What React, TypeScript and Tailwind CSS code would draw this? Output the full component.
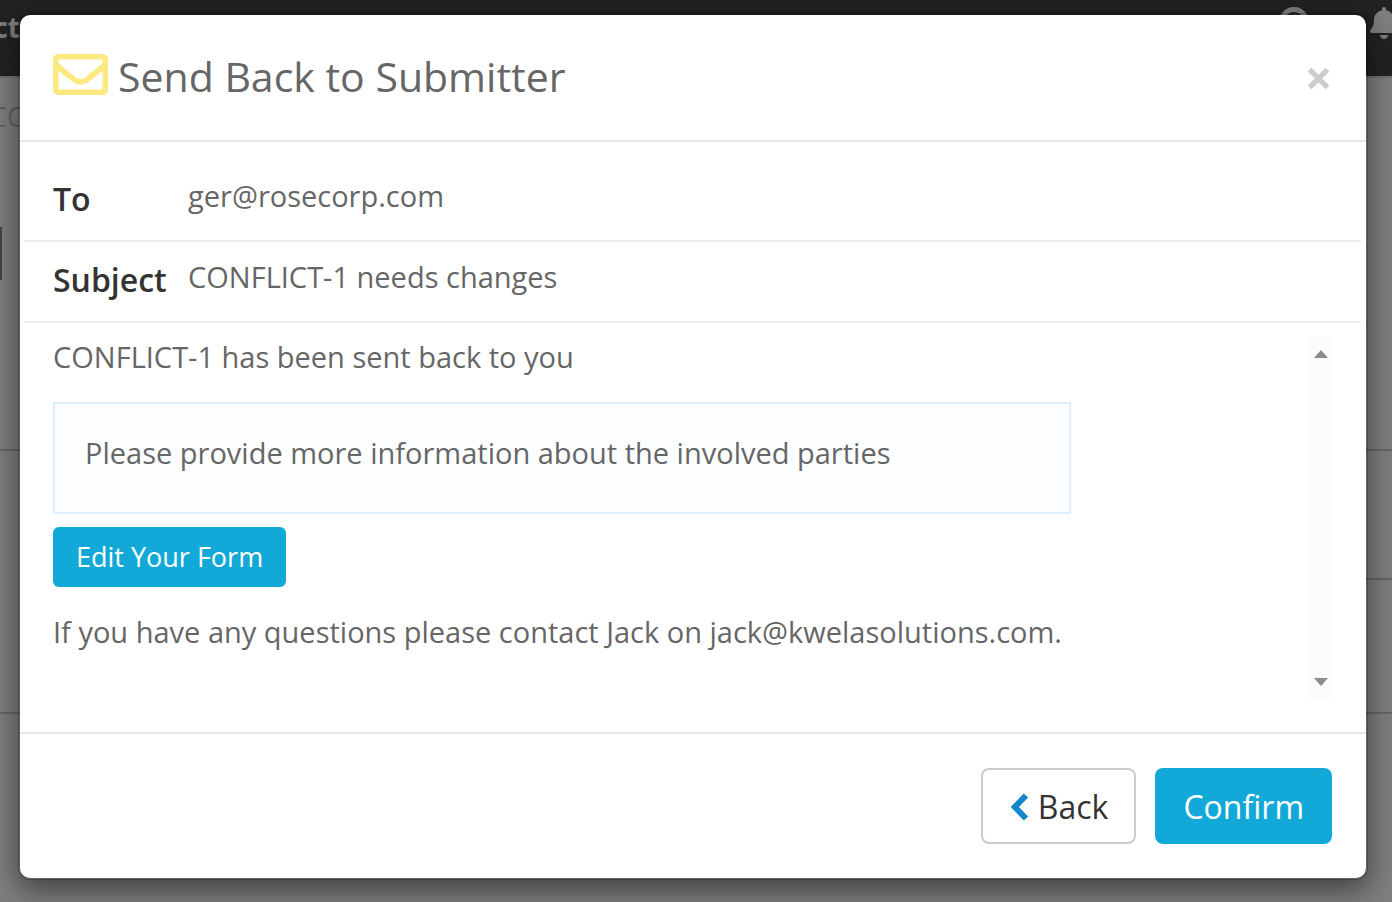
import { FaBell } from "react-icons/fa";

function EnvelopeIcon() {
  return (
    <svg
      viewBox="0 0 55 41"
      aria-hidden="true"
      className="-mt-1 h-[41px] w-[55px] text-[#fde982]"
      fill="none"
      stroke="currentColor"
      strokeWidth="5.5"
    >
      <rect x="2.75" y="2.75" width="49.5" height="35.5" rx="2.5" />
      <path d="M3 11L21 25.500Q27.500 30.500 34 25.500L52 11" />
    </svg>
  );
}

function Backdrop() {
  return (
    <div aria-hidden="true" className="flex h-full flex-col overflow-hidden bg-white">
      <div className="flex h-[76px] shrink-0 justify-between bg-[#444] text-white">
        <span className="flex w-5 justify-end pt-[5px] text-[28px] leading-[44px] font-bold">
          <span>ct</span>
        </span>
        <span className="-mr-[6px] flex items-start gap-[61px] pt-[7px]">
          <svg viewBox="0 0 30 30" className="size-[30px]" fill="none" stroke="currentColor" strokeWidth="5">
            <circle cx="15" cy="15" r="12.5" />
            <path d="M11 13c0-5 8-5 8-1 0 3-4 3-4 6M15 20v3" strokeWidth="3" />
          </svg>
          <FaBell className="h-8 w-7 text-white" />
        </span>
      </div>
      <div className="flex flex-1 flex-col border-t-2 border-[#e0e0e0]">
        <div className="h-[149px] pt-[19px]">
          <span className="-ml-[10px] block text-[27px] leading-[40px] text-[#c4c4c4]">CO</span>
        </div>
        <div className="h-[53px] w-[2px] bg-[#888]" />
        <div className="h-[171px] border-b-2 border-[#ccc]" />
        <div className="flex h-[129px]">
          <div className="flex-1" />
          <div className="w-1/2 border-b-2 border-[#ccc]" />
        </div>
        <div className="h-[134px] border-b-2 border-[#ccc]" />
      </div>
    </div>
  );
}

function Field({ name, value }: { name: string; value: string }) {
  return (
    <>
      <dt className="pt-1 text-[32px] leading-10 font-semibold text-[#333]">{name}</dt>
      <dd className="pt-px text-[29px] leading-10">{value}</dd>
    </>
  );
}

function MessageScrollbar() {
  return (
    <div className="flex w-[23px] flex-col items-center justify-between bg-[#fcfcfc] py-[13px]">
      <button type="button" aria-label="Scroll up">
        <svg viewBox="0 0 14 8" className="block h-2 w-[14px] fill-[#8b8b8b]">
          <path d="M7 0l7 8H0z" />
        </svg>
      </button>
      <button type="button" aria-label="Scroll down">
        <svg viewBox="0 0 14 8" className="block h-2 w-[14px] fill-[#8b8b8b]">
          <path d="M0 0h14L7 8z" />
        </svg>
      </button>
    </div>
  );
}

export default function App() {
  return (
    <div className="relative h-screen overflow-hidden font-['Open_Sans',sans-serif] text-[#666]">
      <Backdrop />
      <div className="absolute inset-0 bg-black/50 pt-[13px] pr-6 pl-[18px]">
        <section
          role="dialog"
          aria-modal="true"
          aria-labelledby="dialog-title"
          className="rounded-xl border-2 border-black/20 bg-white bg-clip-padding shadow-[0_10px_30px_rgba(0,0,0,0.5)]"
        >
          <header className="flex items-center justify-between border-b-2 border-[#e5e5e5] px-[33px] pt-[31px] pb-[34px]">
            <h1 id="dialog-title" className="flex items-center gap-[10px] text-[41px] leading-[60px]">
              <EnvelopeIcon />
              Send Back to Submitter
            </h1>
            <button type="button" aria-label="Close" className="mt-1 mr-1 text-[#ccc]">
              <svg viewBox="0 0 20 20" className="block size-[21px]" stroke="currentColor" strokeWidth="5">
                <path d="M1.5 1.5l17 17M18.5 1.5l-17 17" />
              </svg>
            </button>
          </header>

          <dl className="pr-[5px] pl-1">
            <div className="grid grid-cols-[135px_1fr] border-b-2 border-[#eee] px-[29px] pt-[33px] pb-[21px]">
              <Field name="To" value="ger@rosecorp.com" />
            </div>
            <div className="grid grid-cols-[135px_1fr] border-b-2 border-[#eee] px-[29px] pt-[14px] pb-[21px]">
              <Field name="Subject" value="CONFLICT-1 needs changes" />
            </div>
          </dl>

          <div className="flex justify-between pt-[14px] pr-[34px] pb-[33px] pl-[33px] text-[29px] leading-10">
            <div className="flex h-[362px] min-w-[1018px] flex-col items-start">
              <p>CONFLICT-1 has been sent back to you</p>
              <blockquote className="mt-[25px] self-stretch border-2 border-[#dfeffc] bg-[#fcfeff] px-[30px] pt-[29px] pb-[39px]">
                Please provide more information about the involved parties
              </blockquote>
              <button
                type="button"
                className="mt-[13px] rounded-md bg-[#12a9d8] px-[23px] py-[10px] text-[27px] leading-10 text-white"
              >
                Edit Your Form
              </button>
              <p className="mt-[25px]">
                If you have any questions please contact Jack on jack@kwelasolutions.com.
              </p>
            </div>
            <MessageScrollbar />
          </div>

          <footer className="flex justify-end gap-[19px] border-t-2 border-[#e5e5e5] px-[34px] py-[34px] text-[32px] leading-[44px]">
            <button
              type="button"
              className="flex items-center gap-[9px] rounded-lg border-2 border-[#ccc] px-[26px] pt-[15px] pb-[13px] text-[#333]"
            >
              <svg
                viewBox="0 0 20 28"
                aria-hidden="true"
                className="h-7 w-5 text-[#1287c9]"
                fill="none"
                stroke="currentColor"
                strokeWidth="6"
              >
                <path d="M17 2.500L5.800 14L17 25.500" />
              </svg>
              Back
            </button>
            <button type="button" className="rounded-lg bg-[#12a9d8] px-7 pt-[17px] pb-[15px] text-white">
              Confirm
            </button>
          </footer>
        </section>
      </div>
    </div>
  );
}
